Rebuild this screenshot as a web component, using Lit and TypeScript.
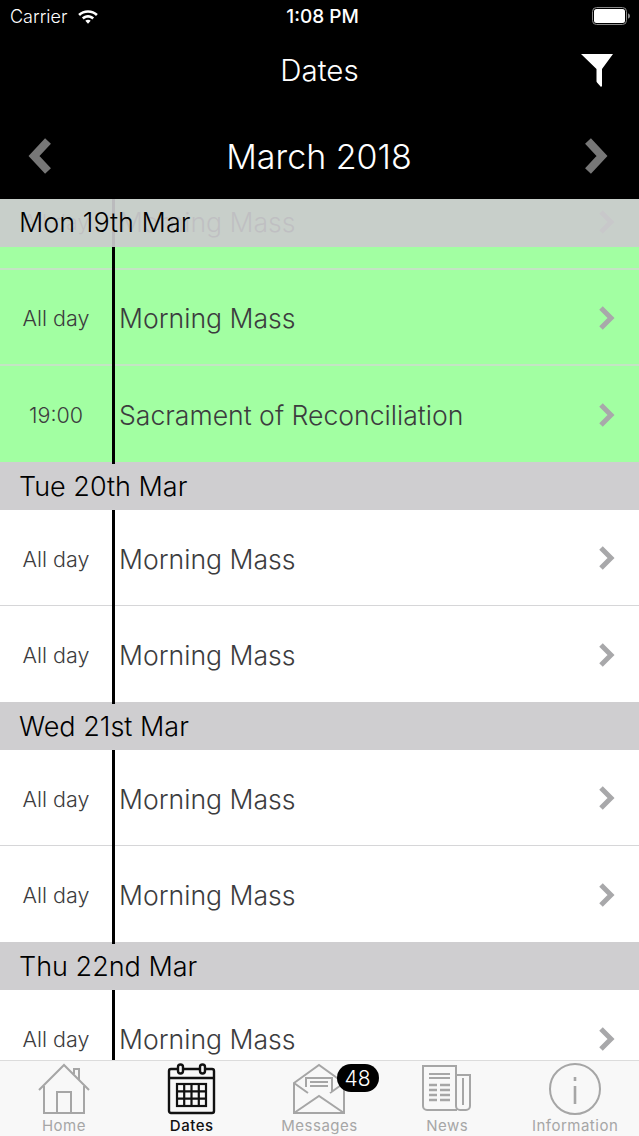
import { LitElement, css, html, svg } from "lit";
import { customElement } from "lit/decorators.js";

interface DateRow {
  time: string;
  title: string;
  green?: boolean;
}

interface Section {
  label: string;
  rows: DateRow[];
}

const SECTIONS: Section[] = [
  {
    label: "Tue 20th Mar",
    rows: [
      { time: "All day", title: "Morning Mass" },
      { time: "All day", title: "Morning Mass" },
    ],
  },
  {
    label: "Wed 21st Mar",
    rows: [
      { time: "All day", title: "Morning Mass" },
      { time: "All day", title: "Morning Mass" },
    ],
  },
  {
    label: "Thu 22nd Mar",
    rows: [{ time: "All day", title: "Morning Mass" }],
  },
];

const FIRST_ROWS: DateRow[] = [
  { time: "All day", title: "Morning Mass", green: true },
  { time: "All day", title: "Morning Mass", green: true },
  { time: "19:00", title: "Sacrament of Reconciliation", green: true },
];

const homeIcon = svg`<svg class="tab-icon" width="54" height="52" viewBox="0 0 54 52" fill="none" stroke="currentColor" stroke-width="2">
  <path d="M2 27 27 2l25 25" />
  <path d="M7 23v27h40V23" />
  <path d="M20 50V29h14v21" />
  <path d="M37 11V6h5v11" />
</svg>`;

const calendarIcon = svg`<svg class="tab-icon" width="50" height="52" viewBox="0 0 50 52" fill="none" stroke="currentColor" stroke-width="2.4">
  <rect x="2" y="6" width="45" height="44" rx="2" />
  <path d="M2 15h45" />
  <rect x="11" y="1.5" width="5" height="9" rx="2.5" fill="#f8f8f8" />
  <rect x="33" y="1.5" width="5" height="9" rx="2.5" fill="#f8f8f8" />
  <rect x="10" y="21" width="29" height="22" stroke-width="2.2" />
  <path d="M17.2 21v22M24.5 21v22M31.8 21v22M10 28.3h29M10 35.6h29" stroke-width="2.2" />
</svg>`;

const envelopeIcon = svg`<svg class="tab-icon" width="54" height="52" viewBox="0 0 54 52" fill="none" stroke="currentColor" stroke-width="2">
  <path d="M2 20 27 2l25 18v30H2z" />
  <path d="M2 50 27 33l25 17" />
  <path d="M2 20l14 10M52 20 38 30" />
  <path d="M14 24V15h26v14" fill="#f8f8f8" />
  <path d="M18 19h18M18 23h18" />
</svg>`;

const newsIcon = svg`<svg class="tab-icon" width="52" height="50" viewBox="0 0 52 50" fill="none" stroke="currentColor" stroke-width="2">
  <path d="M36 46H6a4 4 0 0 1-4-4V2h33v40a4 4 0 0 0 4 4h6a4 4 0 0 0 4-4V11H35" />
  <path d="M42 14v27" />
  <path d="M8 10h21M8 14h21" />
  <path d="M8 21h8M8 26h8M8 31h8M8 36h8M19 21h10M19 26h10M19 31h10M19 36h10" stroke-width="2.4" />
</svg>`;

const infoIcon = svg`<svg class="tab-icon" width="54" height="52" viewBox="0 0 54 52" fill="none" stroke="currentColor" stroke-width="2">
  <circle cx="27" cy="26" r="25" />
  <path d="M27 23v18" stroke-width="2.6" />
  <path d="M27 14v4" stroke-width="2.6" />
</svg>`;

const chevron = svg`<svg class="chevron" width="18" height="26" viewBox="0 0 18 26" fill="none" stroke="#a8a8aa" stroke-width="5">
  <path d="M3 3l10 10-10 10" />
</svg>`;

@customElement("app-root")
export class AppRoot extends LitElement {
  static styles = css`
    :host {
      display: flex;
      flex-direction: column;
      width: 639px;
      height: 1136px;
      overflow: hidden;
      background: #fff;
      font-family: Inter, "Liberation Sans", sans-serif;
    }
    .top {
      flex: none;
      height: 199px;
      background: #000;
      color: #fff;
      display: flex;
      flex-direction: column;
    }
    .status {
      height: 32px;
      display: grid;
      grid-template-columns: 1fr auto 1fr;
      align-items: center;
      padding: 0 8px 0 10px;
      font-size: 18px;
    }
    .carrier {
      display: flex;
      align-items: center;
      gap: 10px;
      font-weight: 300;
    }
    .clock {
      padding-left: 4px;
      font-size: 19px;
      font-weight: 500;
    }
    .battery {
      justify-self: end;
      display: block;
    }
    .title-bar {
      height: 76px;
      display: flex;
      align-items: center;
      justify-content: center;
      position: relative;
      font-size: 29.5px;
      font-weight: 300;
    }
    .filter {
      position: absolute;
      right: 26px;
      top: 22px;
    }
    .month-bar {
      margin-top: 5px;
      height: 86px;
      display: flex;
      align-items: center;
      justify-content: space-between;
      padding: 0 30px 0 27px;
      font-size: 34px;
      font-weight: 300;
    }
    .month-bar span {
      padding-left: 2px;
    }
    .list {
      flex: 1;
      min-height: 0;
      overflow: hidden;
      position: relative;
    }
    .rows {
      margin-top: -25px;
    }
    .section-head {
      height: 48px;
      display: flex;
      align-items: center;
      padding-left: 19px;
      background: #cfced0;
      color: #000;
      font-size: 27px;
      font-weight: 300;
    }
    .section-head.stuck {
      position: absolute;
      top: 0;
      left: 0;
      right: 0;
      padding-bottom: 2px;
      box-sizing: border-box;
      background: rgba(203, 203, 205, 0.92);
    }
    .row {
      height: 96px;
      box-sizing: border-box;
      display: flex;
      align-items: stretch;
      border-bottom: 1px solid #d6d6d8;
      color: #3c3c3e;
      background: #fff;
    }
    .row.green {
      background: #a2ffa2;
      border-bottom: 2px solid #c4e4c4;
    }
    .row.last {
      border-bottom: none;
    }
    .time {
      width: 112px;
      flex: none;
      display: flex;
      align-items: center;
      justify-content: center;
      padding-top: 2px;
      box-sizing: border-box;
      font-size: 21.5px;
      font-weight: 300;
    }
    .rule {
      width: 3px;
      flex: none;
      background: #000;
      margin-bottom: -2px;
    }
    .title {
      flex: 1;
      display: flex;
      align-items: center;
      padding: 2px 0 0 4px;
      font-size: 26.6px;
      font-weight: 300;
    }
    .chevron {
      align-self: center;
      margin: 1px 23px 0 0;
    }
    .tabs {
      flex: none;
      height: 76px;
      box-sizing: border-box;
      border-top: 1px solid #dcdcdc;
      background: #f8f8f8;
      position: relative;
      display: grid;
      grid-template-columns: repeat(5, 1fr);
    }
    .tab {
      position: relative;
      display: flex;
      flex-direction: column;
      align-items: center;
      padding-top: 2px;
      color: #a6a6a6;
      font-size: 15px;
      font-weight: 400;
      letter-spacing: 0.5px;
    }
    .tab.active {
      color: #111;
      font-weight: 500;
    }
    .tab-icon {
      display: block;
      flex: none;
      height: 52px;
    }
    .tab span {
      line-height: 22px;
    }
    .badge {
      position: absolute;
      left: 81px;
      top: 3px;
      width: 42px;
      height: 28px;
      border-radius: 14px;
      background: #000;
      color: #fff;
      font-size: 21px;
      font-weight: 300;
      letter-spacing: 0;
      display: flex;
      align-items: center;
      justify-content: center;
    }
  `;

  private renderRow(row: DateRow, last: boolean) {
    const cls = `row${row.green ? " green" : ""}${last ? " last" : ""}`;
    return html`<div class=${cls}>
      <div class="time">${row.time}</div>
      <div class="rule"></div>
      <div class="title">${row.title}</div>
      ${chevron}
    </div>`;
  }

  render() {
    return html`
      <div class="top">
        <div class="status">
          <div class="carrier">
            Carrier
            <svg width="22" height="16" viewBox="0 0 20 15" fill="#fff">
              <path d="M10 2C6.4 2 3.2 3.4.8 5.7l1.7 1.8C4.5 5.600 7.100 4.500 10 4.500s5.500 1.100 7.500 3l1.700-1.800C16.800 3.400 13.600 2 10 2z" />
              <path d="M10 6.600c-2.200 0-4.200.9-5.700 2.300l1.700 1.800c1-1 2.500-1.600 4-1.600s3 .6 4 1.600l1.700-1.800C14.200 7.500 12.200 6.600 10 6.600z" />
              <path d="M10 11c-1 0-1.900.4-2.500 1L10 14.700l2.500-2.700c-.6-.6-1.500-1-2.500-1z" />
            </svg>
          </div>
          <div class="clock">1:08 PM</div>
          <svg class="battery" width="39" height="18" viewBox="0 0 39 18">
            <rect x="0.500" y="0.500" width="34" height="17" rx="4" fill="none" stroke="#8a8a8a" />
            <rect x="2" y="2" width="31" height="14" rx="2.500" fill="#fff" />
            <path d="M36 6.500c1.500.3 2 1.300 2 2.500s-.5 2.200-2 2.500z" fill="#8a8a8a" />
          </svg>
        </div>
        <div class="title-bar">
          Dates
          <svg class="filter" width="32" height="33" viewBox="0 0 32 33" fill="#fff">
            <path d="M0 0h32L21 15v17l-1 1-4-4.500-.5-1V15z" />
          </svg>
        </div>
        <div class="month-bar">
          <svg width="26" height="36" viewBox="0 0 26 36" fill="none" stroke="#777" stroke-width="8">
            <path d="M21 3 7 18l14 15" />
          </svg>
          <span>March 2018</span>
          <svg width="26" height="36" viewBox="0 0 26 36" fill="none" stroke="#777" stroke-width="8">
            <path d="M5 3l14 15L5 33" />
          </svg>
        </div>
      </div>
      <div class="list">
        <div class="rows">
          ${FIRST_ROWS.map((r, i) => this.renderRow(r, i === FIRST_ROWS.length - 1))}
          ${SECTIONS.map(
            (s) => html`
              <div class="section-head">${s.label}</div>
              ${s.rows.map((r, i) => this.renderRow(r, i === s.rows.length - 1))}
            `,
          )}
        </div>
        <div class="section-head stuck">Mon 19th Mar</div>
      </div>
      <div class="tabs">
        <div class="tab">${homeIcon}<span>Home</span></div>
        <div class="tab active">${calendarIcon}<span>Dates</span></div>
        <div class="tab">${envelopeIcon}<span>Messages</span><div class="badge">48</div></div>
        <div class="tab">${newsIcon}<span>News</span></div>
        <div class="tab">${infoIcon}<span>Information</span></div>
      </div>
    `;
  }
}
